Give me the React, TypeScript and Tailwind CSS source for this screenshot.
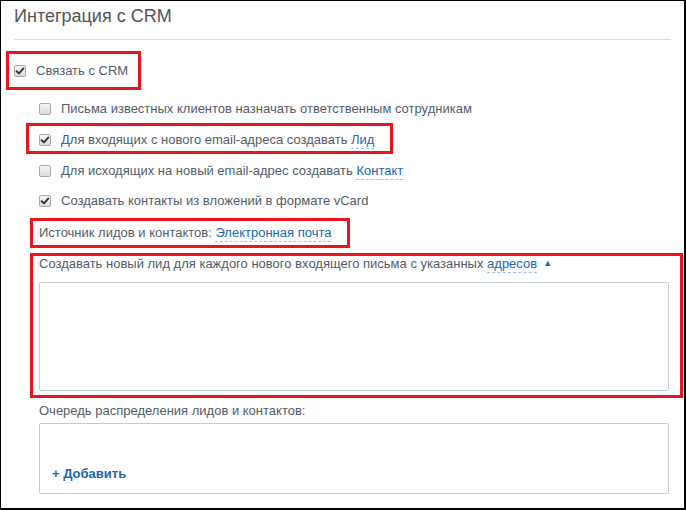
import type { ReactNode } from 'react';

const TEXT = 'text-[#535c69]';

function Box({ checked }: { checked?: boolean }) {
  return (
    <span className="w-[12px] h-[12px] shrink-0 rounded-[2px] border border-[#a9a9a9] bg-linear-to-b from-[#f6f6f6] to-[#dcdcdc] flex items-center justify-center">
      {checked && (
        <svg width="10" height="10" viewBox="0 0 10 10">
          <path d="M1.6 5.2 L4 7.4 L8.4 2.4" fill="none" stroke="#333" strokeWidth="1.9" strokeLinecap="round" strokeLinejoin="round" />
        </svg>
      )}
    </span>
  );
}

function Link({ children }: { children: ReactNode }) {
  return (
    <span className="text-[#2067b0] underline decoration-dashed decoration-[#9dbde0] underline-offset-[4px] decoration-1">
      {children}
    </span>
  );
}

function Row({ checked, children }: { checked?: boolean; children: ReactNode }) {
  return (
    <div className="flex items-center gap-[10px]">
      <Box checked={checked} />
      <span className={`text-[13px] leading-[16px] ${TEXT} whitespace-nowrap`}>{children}</span>
    </div>
  );
}

export default function App() {
  return (
    <div
      className="w-[686px] h-[510px] box-border border-l border-t border-r-2 border-b-2 border-black bg-white overflow-hidden"
      style={{ fontFamily: '"Liberation Sans", Arial, sans-serif' }}
    >
      <div className="mx-[13px] h-[39px] box-border border-b border-[#dcdcdc] pt-[4px]">
        <h1 className="text-[18px] leading-[22px] text-[#545454] font-normal">Интеграция с CRM</h1>
      </div>

      <div className="ml-[5px] mt-[11px] w-[135px] h-[39px] box-border border-[3px] border-[#e8141e] flex items-center pl-[5px] pt-[1px]">
        <Row checked>Связать с CRM</Row>
      </div>

      <div className="ml-[38px] mt-[4px] flex flex-col">
        <div className="h-[30px] flex items-center">
          <Row>Письма известных клиентов назначать ответственным сотрудникам</Row>
        </div>

        <div className="-ml-[13px] -mt-[1px] w-[367px] h-[31px] box-border border-[3px] border-[#e8141e] flex items-center pl-[10px] pt-[2px]">
          <Row checked>
            Для входящих с нового email-адреса создавать <Link>Лид</Link>
          </Row>
        </div>

        <div className="mt-[1px] h-[31px] flex items-center">
          <Row>
            Для исходящих на новый email-адрес создавать <Link>Контакт</Link>
          </Row>
        </div>

        <div className="h-[30px] flex items-center">
          <Row checked>Создавать контакты из вложений в формате vCard</Row>
        </div>

        <div className="-ml-[9px] mt-[2px] w-[320px] h-[30px] box-border border-[3px] border-[#e8141e] flex items-center pl-[6px]">
          <span className={`text-[13px] leading-[16px] ${TEXT} whitespace-nowrap`}>
            Источник лидов и контактов: <Link>Электронная почта</Link>
          </span>
        </div>

        <div className="-ml-[9px] mt-[5px] w-[653px] h-[145px] box-border border-[3px] border-[#e8141e] pl-[6px]">
          <div className={`text-[13px] leading-[15px] ${TEXT} whitespace-nowrap flex items-center`}>
            Создавать новый лид для каждого нового входящего письма с указанных&nbsp;<Link>адресов</Link>
            <span className="ml-[6px] text-[9px] leading-[9px] text-[#2067b0]">▲</span>
          </div>
          <div className="mt-[11px] w-[630px] h-[109px] box-border border border-[#c6cbd1] rounded-[2px] bg-white" />
        </div>

        <div className={`mt-[5px] text-[13px] leading-[16px] ${TEXT}`}>Очередь распределения лидов и контактов:</div>

        <div className="mt-[4px] w-[630px] h-[71px] box-border border border-[#c6cbd1] rounded-[2px] flex flex-col justify-end pl-[12px] pb-[11px]">
          <span className="text-[13px] leading-[16px] font-bold text-[#2067b0]">+ Добавить</span>
        </div>
      </div>
    </div>
  );
}
